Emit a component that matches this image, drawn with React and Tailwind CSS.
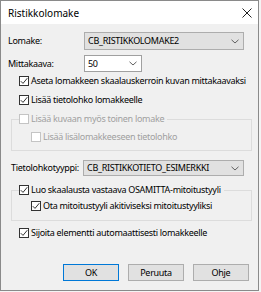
import React from "react";

const font = { fontFamily: '"Noto Sans", "Segoe UI", sans-serif' };

function Check({ checked = false, disabled = false }) {
  return (
    <span
      className={`flex h-[10px] w-[10px] shrink-0 items-center justify-center border bg-white ${
        disabled ? "border-[#c4c4c4]" : "border-[#333333]"
      }`}
    >
      {checked && (
        <svg width="8" height="8" viewBox="0 0 8 8">
          <path d="M0.8 4.2 L3 6.4 L7.3 1.2" fill="none" stroke="#333" strokeWidth="1" />
        </svg>
      )}
    </span>
  );
}

function CheckRow({ label, checked, disabled, className = "" }) {
  return (
    <div className={`flex h-[14px] items-center gap-[2px] whitespace-nowrap ${className}`}>
      <Check checked={checked} disabled={disabled} />
      <span className={disabled ? "text-[#a0a0a0]" : "text-black"}>{label}</span>
    </div>
  );
}

function Chevron() {
  return (
    <svg width="8" height="5" viewBox="0 0 8 5">
      <path d="M0.5 0.8 L4 4 L7.5 0.8" fill="none" stroke="#606060" strokeWidth="1" />
    </svg>
  );
}

function Button({ children, primary }) {
  return (
    <div
      className={`flex h-[17px] w-[56px] items-center justify-center bg-[#e1e1e1] ${
        primary ? "border border-[#0078d7]" : "border border-[#adadad]"
      }`}
    >
      {children}
    </div>
  );
}

export default function App() {
  return (
    <div className="h-[292px] w-[261px] bg-[#f4f4f4]" style={font}>
      <div className="flex h-[291px] w-[259px] flex-col border border-[#8a8a8a] text-[9px] leading-[14px] tracking-[-0.3px] text-black">
        {/* title bar */}
        <div className="flex h-[23px] shrink-0 items-center justify-between bg-white pl-[7px] pr-[6px]">
          <span className="text-[10px] tracking-normal">Ristikkolomake</span>
          <svg width="10" height="10" viewBox="0 0 10 10">
            <path d="M0.5 0.5 L9.5 9.5 M9.5 0.5 L0.5 9.5" stroke="#222" strokeWidth="1" />
          </svg>
        </div>
        {/* body */}
        <div className="flex flex-1 flex-col bg-[#f0f0f0]">
          {/* Lomake */}
          <div className="mt-[8px] flex h-[18px] items-center whitespace-nowrap">
            <span className="w-[83px] pl-[7px]">Lomake:</span>
            <div className="flex h-[18px] w-[160px] items-center justify-between border border-[#adadad] bg-[#e1e1e1] pl-[3px] pr-[4px]">
              <span>CB_RISTIKKOLOMAKE2</span>
              <Chevron />
            </div>
          </div>
          {/* Mittakaava */}
          <div className="mt-[5px] flex h-[17px] items-center whitespace-nowrap">
            <span className="w-[83px] pl-[7px]">Mittakaava:</span>
            <div className="flex h-[17px] w-[58px] items-center justify-between border border-[#a0a0a0] bg-white pl-[3px] pr-[4px]">
              <span>50</span>
              <Chevron />
            </div>
          </div>
          <CheckRow className="mt-[2px] ml-[18px]" checked label="Aseta lomakkeen skaalauskerroin kuvan mittakaavaksi" />
          <CheckRow className="mt-[5px] ml-[18px]" checked label="Lisää tietolohko lomakkeelle" />
          {/* group 1 */}
          <fieldset className="mt-[5px] ml-[10px] w-[241px] border border-[#dcdcdc] pb-[6px]">
            <legend className="ml-[7px] pr-[3px]">
              <CheckRow disabled label="Lisää kuvaan myös toinen lomake" />
            </legend>
            <CheckRow className="mt-[4px] ml-[19px]" disabled label="Lisää lisälomakkeeseen tietolohko" />
          </fieldset>
          {/* Tietolohkotyyppi */}
          <div className="mt-[9px] flex h-[16px] items-center whitespace-nowrap">
            <span className="w-[82px] pl-[10px]">Tietolohkotyyppi:</span>
            <div className="flex h-[16px] w-[161px] items-center justify-between border border-[#adadad] bg-[#e1e1e1] pl-[3px] pr-[4px]">
              <span>CB_RISTIKKOTIETO_ESIMERKKI</span>
              <Chevron />
            </div>
          </div>
          {/* group 2 */}
          <fieldset className="mt-[7px] ml-[10px] w-[241px] border border-[#dcdcdc] pb-[7px]">
            <legend className="ml-[7px] pr-[3px]">
              <CheckRow checked label="Luo skaalausta vastaava OSAMITTA-mitoitustyyli" />
            </legend>
            <CheckRow className="mt-[2px] ml-[19px]" checked label="Ota mitoitustyyli akitiviseksi mitoitustyyliksi" />
          </fieldset>
          <CheckRow className="mt-[5px] ml-[18px]" checked label="Sijoita elementti automaattisesti lomakkeelle" />
          {/* buttons */}
          <div className="mt-[24px] ml-[62px] flex gap-[9px]">
            <Button primary>OK</Button>
            <Button>Peruuta</Button>
            <Button>Ohje</Button>
          </div>
        </div>
      </div>
    </div>
  );
}
